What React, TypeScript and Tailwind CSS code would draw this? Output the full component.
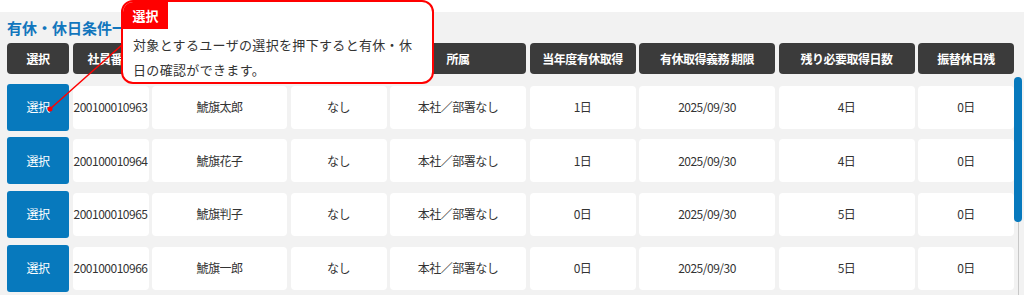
import React from "react";

const font = { fontFamily: "'Noto Sans CJK JP', 'Noto Sans', sans-serif" };

const headers = ["選択", "社員番号", "氏名", "連携", "所属", "当年度有休取得", "有休取得義務 期限", "残り必要取得日数", "振替休日残"];

const rows = [
  ["200100010963", "鯱旗太郎", "なし", "本社／部署なし", "1日", "2025/09/30", "4日", "0日"],
  ["200100010964", "鯱旗花子", "なし", "本社／部署なし", "1日", "2025/09/30", "4日", "0日"],
  ["200100010965", "鯱旗判子", "なし", "本社／部署なし", "0日", "2025/09/30", "5日", "0日"],
  ["200100010966", "鯱旗一郎", "なし", "本社／部署なし", "0日", "2025/09/30", "5日", "0日"],
];

const cols = "grid grid-cols-[62px_76px_135px_96px_136px_106px_136px_136px_96px] gap-x-[3.5px]";

export default function App() {
  return (
    <div className="relative w-[1024px] h-[295px] overflow-hidden bg-white" style={font}>
      <div className="mt-[12px] h-[283px] bg-[#f2f2f2] px-[7px]">
        <div className="pt-[6px] h-[31px] text-[15px] font-bold leading-[20px] text-[#1276bd]">有休・休日条件一覧</div>
        <div className={cols}>
          {headers.map((h, i) => (
            <div key={i} className="h-[31px] rounded-[4px] bg-[#3b3b3b] flex items-center justify-center text-[12px] tracking-[-0.5px] font-bold text-white whitespace-nowrap overflow-hidden">
              {h}
            </div>
          ))}
        </div>
        <div className="mt-[9.5px] flex flex-col gap-y-[6.7px]">
          {rows.map((r, ri) => (
            <div key={ri} className={cols}>
              <div className="h-[47px] rounded-[3px] bg-[#0779bd] flex items-center justify-center text-[12px] tracking-[-0.5px] text-white">選択</div>
              {r.map((c, ci) => (
                <div key={ci} className="my-[2px] h-[43px] rounded-[4px] bg-white flex items-center justify-center text-[12px] tracking-[-0.5px] text-[#333] whitespace-nowrap">
                  {c}
                </div>
              ))}
            </div>
          ))}
        </div>
      </div>

      {/* scrollbar */}
      <div className="absolute left-[1017.5px] top-[77px] w-[1px] h-[218px] bg-[#c8c8c8]" />
      <div className="absolute left-[1014px] top-[77px] w-[8px] h-[145px] rounded-full bg-[#0779bd]" />

      {/* connector line */}
      <svg className="absolute left-0 top-0" width="200" height="140">
        <line x1="123" y1="44" x2="50" y2="109" stroke="#ff0000" strokeWidth="1.5" />
        <circle cx="50" cy="109" r="2.5" fill="#ff0000" />
      </svg>

      {/* tooltip */}
      <div className="absolute left-[121px] top-0 w-[313px] h-[84px] rounded-[12px] border-2 border-[#ff0000] bg-white overflow-hidden">
        <div className="absolute left-0 top-0 w-[45px] h-[27px] bg-[#ff0000] flex items-center justify-center text-[13px] font-bold text-white">選択</div>
        <div className="pt-[30px] pl-[10px] text-[13px] leading-[25px] tracking-[0.33px] text-[#333] whitespace-nowrap">
          対象とするユーザの選択を押下すると有休・休<br />日の確認ができます。
        </div>
      </div>
    </div>
  );
}
